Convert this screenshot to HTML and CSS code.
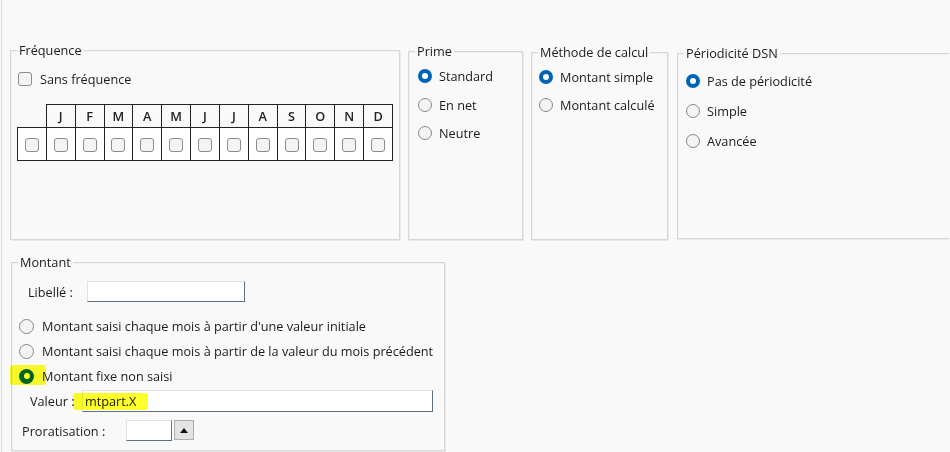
FILE: index.html
```html
<!DOCTYPE html>
<html lang="fr">
<head>
<meta charset="utf-8">
<title>Montant</title>
<link rel="stylesheet" href="styles.css">
</head>
<body>
<div class="page">
  <div class="top-row">
    <fieldset class="grp freq">
      <legend>Fréquence</legend>
      <div class="line chk-line"><span class="cb"></span><span>Sans fréquence</span></div>
      <table class="months">
        <tr class="head">
          <td class="blank"></td>
          <th>J</th><th>F</th><th>M</th><th>A</th><th>M</th><th>J</th><th>J</th><th>A</th><th>S</th><th>O</th><th>N</th><th>D</th>
        </tr>
        <tr class="boxes">
          <td><span class="cb"></span></td><td><span class="cb"></span></td><td><span class="cb"></span></td><td><span class="cb"></span></td><td><span class="cb"></span></td><td><span class="cb"></span></td><td><span class="cb"></span></td><td><span class="cb"></span></td><td><span class="cb"></span></td><td><span class="cb"></span></td><td><span class="cb"></span></td><td><span class="cb"></span></td><td><span class="cb"></span></td>
        </tr>
      </table>
    </fieldset>
    <fieldset class="grp prime">
      <legend>Prime</legend>
      <div class="radios">
        <div class="line"><span class="rb on"></span><span>Standard</span></div>
        <div class="line"><span class="rb"></span><span>En net</span></div>
        <div class="line"><span class="rb"></span><span>Neutre</span></div>
      </div>
    </fieldset>
    <fieldset class="grp methode">
      <legend>Méthode de calcul</legend>
      <div class="radios">
        <div class="line"><span class="rb on"></span><span>Montant simple</span></div>
        <div class="line"><span class="rb"></span><span>Montant calculé</span></div>
      </div>
    </fieldset>
    <fieldset class="grp dsn">
      <legend>Périodicité DSN</legend>
      <div class="radios">
        <div class="line"><span class="rb on"></span><span>Pas de périodicité</span></div>
        <div class="line"><span class="rb"></span><span>Simple</span></div>
        <div class="line"><span class="rb"></span><span>Avancée</span></div>
      </div>
    </fieldset>
  </div>

  <fieldset class="grp montant">
    <legend>Montant</legend>
    <div class="field libelle"><span class="lbl">Libellé :</span><span class="input w-libelle"></span></div>
    <div class="radios">
      <div class="line"><span class="rb"></span><span>Montant saisi chaque mois à partir d'une valeur initiale</span></div>
      <div class="line"><span class="rb"></span><span>Montant saisi chaque mois à partir de la valeur du mois précédent</span></div>
      <div class="line marked"><span class="rb on"></span><span>Montant fixe non saisi</span><span class="hl hl-radio"></span></div>
    </div>
    <div class="field valeur"><span class="lbl">Valeur :</span><span class="input w-valeur">mtpart.X</span><span class="hl hl-valeur"></span></div>
    <div class="field prorat"><span class="lbl">Proratisation :</span><span class="input w-prorat"></span><span class="spin"><span class="tri"></span></span></div>
  </fieldset>
</div>
</body>
</html>
```
FILE: styles.css
```css
html, body {
  margin: 0;
  padding: 0;
  background: #f9f9f9;
}
body {
  font-family: "Open Sans", "Noto Sans", sans-serif;
  font-size: 12.7px;
  line-height: 16px;
  color: #1b1b1b;
}
.page {
  width: 948px;
  height: 452px;
  margin-left: 1px;
  border-left: 1px solid #dcdcdc;
  box-sizing: border-box;
  padding: 42px 0 0 8px;
  overflow: hidden;
}
.top-row {
  display: flex;
  align-items: flex-start;
  gap: 8px;
  width: 960px;
}
.grp {
  margin: 0;
  padding: 0 6px;
  border: 1px solid #d7d7d7;
  box-shadow: inset 1px 1px 0 #f1f1f1, 1px 1px 0 #e9e9e9;
  box-sizing: border-box;
  min-width: 0;
}
.grp legend {
  padding: 0 2px;
  margin-left: 0;
  line-height: 16px;
}
.freq { width: 390px; height: 198px; }
.prime { width: 115px; height: 197px; margin-top: 1px; }
.methode { width: 137px; height: 196px; margin-top: 2px; }
.dsn { width: 290px; height: 194px; margin-top: 3px; margin-left: 1px; }

.line {
  display: flex;
  align-items: center;
  height: 16px;
  white-space: nowrap;
}
.cb {
  display: inline-block;
  width: 14px;
  height: 14px;
  box-sizing: border-box;
  border: 1px solid #8b8b8b;
  border-radius: 3px;
  background: #f4f4f4;
  flex: none;
}
.rb {
  display: inline-block;
  width: 14px;
  height: 14px;
  box-sizing: border-box;
  border: 1px solid #888;
  border-radius: 50%;
  background: #f4f4f4;
  flex: none;
  position: relative;
}
.rb.on {
  border: none;
  background: #0063b8;
}
.rb.on::after {
  content: "";
  position: absolute;
  left: 4px;
  top: 4px;
  width: 6px;
  height: 6px;
  border-radius: 50%;
  background: #fff;
}

.chk-line {
  margin-top: 13px;
  padding-left: 1px;
  gap: 8px;
}
.months {
  margin-top: 17px;
  border-collapse: collapse;
  table-layout: fixed;
  width: 376px;
}
.months td, .months th {
  border: 1px solid #222;
  padding: 0;
  text-align: center;
}
.months .blank {
  border: none;
}
.months .head th {
  height: 22px;
  font-weight: 600;
  color: #222;
}
.months .boxes td {
  height: 32px;
  background: #fff;
}
.months .boxes .cb {
  vertical-align: middle;
}

.radios {
  display: flex;
  flex-direction: column;
}
.radios .line { gap: 7px; }
.prime .radios { margin-top: 9px; padding-left: 3px; gap: 12.5px; }
.methode .radios { margin-top: 9px; padding-left: 1px; gap: 12px; }
.dsn .radios { margin-top: 12px; padding-left: 2px; gap: 14px; }

.montant {
  width: 434px;
  height: 197px;
  margin-top: 14px;
  margin-left: 1px;
  padding-left: 6px;
}
.field {
  display: flex;
  align-items: center;
  position: relative;
  white-space: nowrap;
}
.input {
  display: inline-block;
  box-sizing: border-box;
  background: #fff;
  border: 1px solid #e2e2e2;
  border-bottom-color: #5b7184;
  border-right-color: #5b7184;
  padding-left: 3px;
  line-height: 19px;
}
.libelle { margin-top: 11px; padding-left: 10px; }
.libelle .lbl { width: 59px; }
.w-libelle { width: 158px; height: 21px; }

.montant .radios { margin-top: 16px; gap: 9px; padding-left: 1px; }
.montant .radios .line { gap: 8px; }
.montant .rb { width: 15px; height: 15px; }
.montant .rb.on::after { left: 4.5px; top: 4.5px; }
.marked { position: relative; }

.hl {
  position: absolute;
  background: #ffff2a;
  mix-blend-mode: multiply;
  border-radius: 3px;
}
.hl-radio { left: -9px; top: -3px; width: 36px; height: 20px; }

.valeur { margin-top: 6px; padding-left: 12px; }
.valeur .lbl { width: 52px; }
.w-valeur { width: 351px; height: 22px; line-height: 20px; padding-left: 2px; }
.hl-valeur { left: 55px; top: 3px; width: 75px; height: 17px; }

.prorat { margin-top: 8px; padding-left: 4px; }
.prorat .lbl { width: 104px; }
.w-prorat { width: 46px; height: 21px; }
.spin {
  display: inline-flex;
  align-items: center;
  justify-content: center;
  width: 20px;
  height: 20px;
  margin-left: 2px;
  box-sizing: border-box;
  background: #e3e3e3;
  border: 1px solid #adadad;
  align-self: flex-start;
}
.tri {
  width: 0;
  height: 0;
  border-left: 4px solid transparent;
  border-right: 4px solid transparent;
  border-bottom: 5px solid #111;
}
```
